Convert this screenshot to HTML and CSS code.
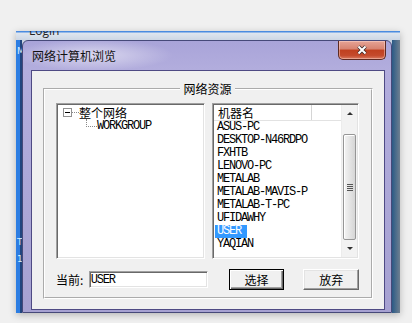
FILE: index.html
```html
<!DOCTYPE html>
<html lang="zh-CN">

<head>
    <meta charset="UTF-8">
    <meta name="viewport" content="width=device-width, initial-scale=1.0">
    <title>网络计算机浏览</title>
    <link rel="stylesheet" href="styles.css">
</head>

<body>
    <!-- window behind the dialog -->
    <div class="back-window">
        <div class="back-title"><span>Login</span></div>
        <div class="back-body">
            <div class="back-side">
                <span class="side-m">M</span>
                <span class="side-t">T</span>
                <span class="side-1">1</span>
            </div>
        </div>
    </div>

    <div class="dialog">
        <div class="title-bar">
            <span class="title-text">网络计算机浏览</span>
            <button class="close-btn" type="button">
                <svg width="12" height="10" viewBox="0 0 12 10">
                    <path d="M2.5 1.5 L9.5 8.5 M9.5 1.5 L2.5 8.5" stroke="#3a2a2a" stroke-width="3.6" fill="none" />
                    <path d="M2.5 1.5 L9.5 8.5 M9.5 1.5 L2.5 8.5" stroke="#ffffff" stroke-width="2" fill="none" />
                </svg>
            </button>
        </div>

        <div class="client">
            <fieldset class="group">
                <legend>网络资源</legend>

                <div class="browse-row">
                    <div class="tree sunken">
                        <div class="tree-node root">
                            <span class="expander"></span>
                            <span class="dots-h"></span>
                            <span class="node-label">整个网络</span>
                        </div>
                        <div class="tree-node child">
                            <span class="dots-l"></span>
                            <span class="node-label mono">WORKGROUP</span>
                        </div>
                    </div>

                    <div class="list sunken">
                        <div class="list-main">
                            <div class="list-header">
                                <span class="col-name">机器名</span>
                                <span class="col-rest"></span>
                            </div>
                            <ul class="items mono">
                                <li><span>ASUS-PC</span></li>
                                <li><span>DESKTOP-N46RDPO</span></li>
                                <li><span>FXHTB</span></li>
                                <li><span>LENOVO-PC</span></li>
                                <li><span>METALAB</span></li>
                                <li><span>METALAB-MAVIS-P</span></li>
                                <li><span>METALAB-T-PC</span></li>
                                <li><span>UFIDAWHY</span></li>
                                <li class="selected"><span>USER</span></li>
                                <li><span>YAQIAN</span></li>
                            </ul>
                        </div>
                        <div class="scrollbar">
                            <div class="sb-button"><span class="arrow-up"></span></div>
                            <div class="sb-track">
                                <div class="sb-thumb"><span class="grip"></span></div>
                            </div>
                            <div class="sb-button"><span class="arrow-down"></span></div>
                        </div>
                    </div>
                </div>

                <div class="action-row">
                    <label class="current-label" for="current">当前:</label>
                    <input class="current-input mono sunken" id="current" type="text" value="USER">
                    <button class="btn default" type="button">选择</button>
                    <button class="btn cancel" type="button">放弃</button>
                </div>
            </fieldset>
        </div>
    </div>
</body>

</html>
```

FILE: styles.css
```css
* {
    box-sizing: border-box;
}

body {
    margin: 0;
    width: 412px;
    height: 323px;
    overflow: hidden;
    background-color: #f0f0f0;
    font-family: "Noto Sans CJK SC", sans-serif;
    font-size: 12px;
    color: #000;
}

.mono {
    font-family: "Liberation Mono", monospace;
    font-size: 12px;
    letter-spacing: -1.2px;
}

/* window behind */
.back-window {
    position: absolute;
    left: 16px;
    top: 31px;
    width: 384px;
    height: 282px;
    display: flex;
    flex-direction: column;
    overflow: hidden;
    box-shadow: 0 2px 7px rgba(0, 0, 0, 0.25);
}

.back-title {
    height: 9px;
    overflow: hidden;
    padding-left: 13px;
    background: linear-gradient(to bottom, #4a8be0 0, #4a8be0 1px, #dfe6ef 2px, #ccd6e4 100%);
    font-family: "Open Sans", sans-serif;
    font-size: 12px;
    color: #222;
}

.back-title span {
    display: block;
    margin-top: -7px;
    line-height: 14px;
}

.back-body {
    flex: 1;
    background: linear-gradient(to right, #2c7de2 0, #2c7de2 4px, #21457e 4px, #21457e 6px, #c8d2e2 6px, #c8d2e2 376px, #1d4a7c 376px, #2a5a86 60%, #6f7f90 100%);
}

.back-side {
    width: 6px;
    display: flex;
    flex-direction: column;
    padding-left: 1px;
    font-family: "DejaVu Sans", sans-serif;
    font-size: 9px;
    line-height: 9px;
    color: #d8ecff;
}

.side-m {
    margin-top: 7px;
}

.side-t {
    margin-top: 182px;
}

.side-1 {
    margin-top: 8px;
}

/* dialog */
.dialog {
    position: absolute;
    left: 22px;
    top: 40px;
    width: 370px;
    height: 273px;
    display: flex;
    flex-direction: column;
    border: 1px solid #464979;
    border-radius: 6px 6px 0 0;
    background:
        radial-gradient(ellipse 80px 16px at 70px 14px, rgba(255, 255, 255, 0.55), rgba(255, 255, 255, 0)),
        linear-gradient(to bottom, #a9a4d9 0, #b2addd 28px, #a6a1d1 100%);
}

.title-bar {
    display: flex;
    height: 29px;
}

.title-text {
    flex: 1;
    align-self: center;
    padding-left: 9px;
    line-height: 14px;
    color: #111;
}

.close-btn {
    width: 48px;
    height: 19px;
    margin: 0 5px 0 0;
    padding: 0;
    display: flex;
    align-items: center;
    justify-content: center;
    border: 1px solid #5d2a22;
    border-top: none;
    border-radius: 0 0 5px 5px;
    background: linear-gradient(to bottom, #e6a496 0, #d7826f 45%, #c0401f 50%, #c44a2c 80%, #d97a5f 100%);
    box-shadow: inset 0 0 0 1px rgba(255, 220, 210, 0.45);
}

.client {
    flex: 1;
    margin: 0 6px 2px 8px;
    padding: 11px 11px 10px;
    border: 1px solid #4e4a84;
    background-color: #f0f0f0;
}

/* group box */
.group {
    margin: 0;
    min-width: 0;
    padding: 7px 12px 7px 11px;
    border: 2px groove #ffffff;
}

.group legend {
    margin: 0 auto;
    padding: 0 3px;
    line-height: 14px;
}

.browse-row {
    display: flex;
    gap: 7px;
    height: 156px;
}

.sunken {
    border: 1px solid;
    border-color: #a0a0a0 #ffffff #ffffff #a0a0a0;
    padding: 1px;
    box-shadow: inset 1px 1px #696969, inset -1px -1px #e3e3e3;
    background-color: #fff;
}

/* tree */
.tree {
    width: 149px;
}

.tree-node {
    display: flex;
    align-items: center;
    white-space: nowrap;
}

.tree-node.root {
    height: 14px;
}

.tree-node.child {
    height: 13px;
    align-items: flex-start;
}

.expander {
    position: relative;
    width: 9px;
    height: 9px;
    margin-left: 5px;
    border: 1px solid #919191;
    background-color: #fff;
}

.expander::after {
    content: "";
    position: absolute;
    left: 1px;
    top: 3px;
    width: 5px;
    height: 1px;
    background-color: #000;
}

.dots-h {
    width: 7px;
    border-top: 1px dotted #8a8a8a;
}

.node-label {
    line-height: 13px;
}

.dots-l {
    width: 11px;
    height: 8px;
    margin-left: 28px;
    border-left: 1px dotted #8a8a8a;
    border-bottom: 1px dotted #8a8a8a;
}

.tree-node.child .node-label {
    margin-top: 1px;
}

/* computer list */
.list {
    flex: 1;
    display: flex;
}

.list-main {
    flex: 1;
}

.list-header {
    display: flex;
    height: 16px;
    border-bottom: 1px solid #e2e2e2;
    line-height: 15px;
}

.col-name {
    width: 98px;
    padding-left: 4px;
    border-right: 1px solid #d5d5d5;
}

.col-rest {
    flex: 1;
}

.items {
    list-style: none;
    margin: 0;
    padding: 0 0 0 1px;
    line-height: 13px;
}

.items li span {
    display: inline-block;
    padding: 0 6px 0 2px;
    height: 13px;
}

.items li.selected span {
    background-color: #3399ff;
    color: #fff;
}

.scrollbar {
    width: 16px;
    display: flex;
    flex-direction: column;
    background-color: #f2f2f2;
    border-left: 1px solid #ececec;
}

.sb-button {
    height: 17px;
    display: flex;
    align-items: center;
    justify-content: center;
}

.arrow-up {
    border-left: 3px solid transparent;
    border-right: 3px solid transparent;
    border-bottom: 3px solid #303030;
}

.arrow-down {
    border-left: 3px solid transparent;
    border-right: 3px solid transparent;
    border-top: 3px solid #303030;
}

.sb-track {
    flex: 1;
    display: flex;
    flex-direction: column;
    padding: 12px 1px 0 1px;
}

.sb-thumb {
    flex: 1;
    display: flex;
    align-items: center;
    justify-content: center;
    border: 1px solid #969696;
    border-radius: 2px;
    background: linear-gradient(to right, #f4f4f4, #e2e2e2 60%, #d6d6d6);
    box-shadow: inset 1px 1px #fff;
}

.grip {
    width: 6px;
    height: 7px;
    background: repeating-linear-gradient(to bottom, #555 0, #555 1px, transparent 1px, transparent 2px);
}

/* bottom row */
.action-row {
    display: flex;
    align-items: center;
    height: 21px;
    margin-top: 10px;
}

.current-label {
    width: 33px;
}

.current-input {
    width: 119px;
    height: 17px;
    margin: 0;
    padding: 0 1px;
    outline: none;
}

.btn {
    width: 56px;
    height: 21px;
    margin: 0;
    padding: 0;
    font-family: "Noto Sans CJK SC", sans-serif;
    font-size: 12px;
    color: #000;
    background-color: #f0f0f0;
    border: 1px solid;
    border-color: #ffffff #696969 #696969 #ffffff;
    box-shadow: inset -1px -1px #a0a0a0, inset 1px 1px #e3e3e3;
}

.btn.default {
    margin-left: 21px;
    border-color: #000;
    box-shadow: inset 1px 1px #fff, inset -1px -1px #696969, inset -2px -2px #a0a0a0;
}

.btn.cancel {
    margin-left: 19px;
}
```
